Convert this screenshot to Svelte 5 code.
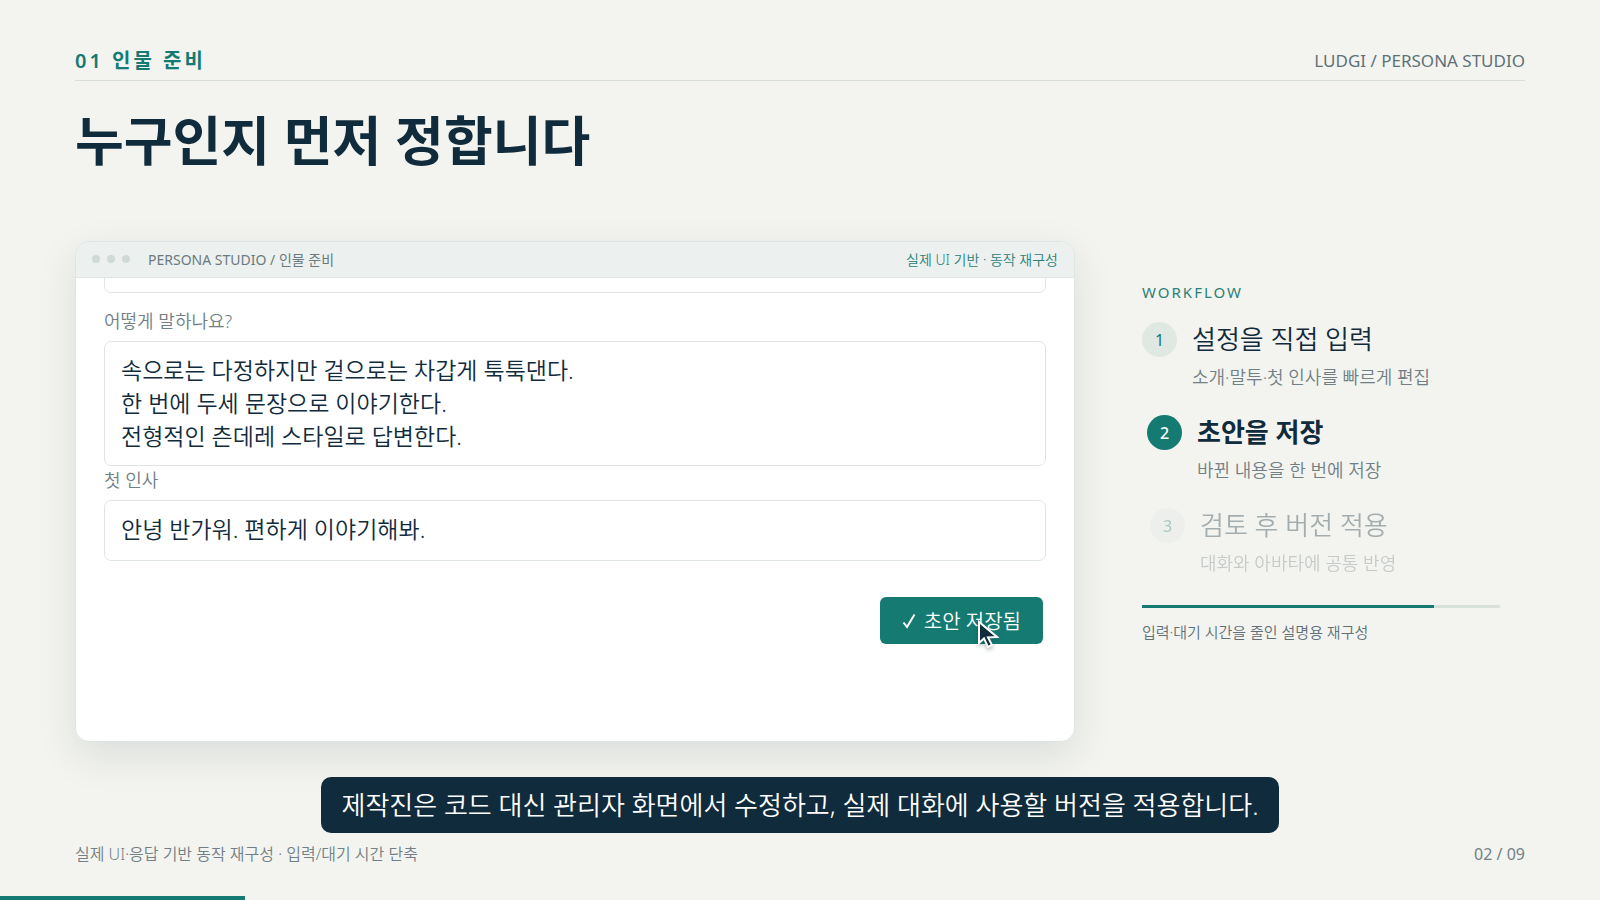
<!--
Persona Studio walkthrough - slide 02
Shows the draft form next to the workflow steps, with a caption below.
-->

<script lang="ts">
  interface Step {
    title: string
    detail: string
    state: 'done' | 'active' | 'pending'
  }

  const steps: Step[] = [
    { title: '설정을 직접 입력', detail: '소개·말투·첫 인사를 빠르게 편집', state: 'done' },
    { title: '초안을 저장', detail: '바뀐 내용을 한 번에 저장', state: 'active' },
    { title: '검토 후 버전 적용', detail: '대화와 아바타에 공통 반영', state: 'pending' },
  ]

  const stepProgress = 81.6
  const videoProgress = 15.3

  let intro = $state('')
  let tone = $state(
    '속으로는 다정하지만 겉으로는 차갑게 툭툭댄다.\n한 번에 두세 문장으로 이야기한다.\n전형적인 츤데레 스타일로 답변한다.'
  )
  let greeting = $state('안녕 반가워. 편하게 이야기해봐.')
</script>

<div class="slide">
  <header class="topline">
    <p class="chapter">01 인물 준비</p>
    <p class="brand">LUDGI / PERSONA STUDIO</p>
  </header>

  <h1>누구인지 먼저 정합니다</h1>

  <main class="stage">
    <section class="window">
      <div class="titlebar">
        <span class="dots"><i></i><i></i><i></i></span>
        <span class="window-title">PERSONA STUDIO / 인물 준비</span>
        <span class="window-note">실제 UI 기반 · 동작 재구성</span>
      </div>
      <div class="window-body">
        <form onsubmit={(e) => e.preventDefault()}>
          <input class="field intro" aria-label="소개" bind:value={intro} />
          <label for="tone">어떻게 말하나요?</label>
          <textarea id="tone" class="field" rows="3" bind:value={tone}></textarea>
          <label for="greeting">첫 인사</label>
          <input id="greeting" class="field" bind:value={greeting} />
          <div class="actions">
            <button type="submit">
              <svg class="check" viewBox="0 0 14 16" aria-hidden="true">
                <path d="M1.5 9.5 5 14 12.5 1.5" />
              </svg>
              초안 저장됨
            </button>
            <svg class="pointer" viewBox="0 0 26 34" aria-hidden="true">
              <path d="M3 3V24L8 19.5L12 28L16 26L12 18.5L21 18Z" />
            </svg>
          </div>
        </form>
      </div>
    </section>

    <aside class="workflow">
      <h2>WORKFLOW</h2>
      <ol>
        {#each steps as step, i}
          <li class={step.state}>
            <span class="badge">{i + 1}</span>
            <div>
              <h3>{step.title}</h3>
              <p>{step.detail}</p>
            </div>
          </li>
        {/each}
      </ol>
      <div class="track"><div class="fill" style:width="{stepProgress}%"></div></div>
      <p class="remark">입력·대기 시간을 줄인 설명용 재구성</p>
    </aside>
  </main>

  <p class="caption">
    제작진은 코드 대신 관리자 화면에서 수정하고, 실제 대화에 사용할 버전을 적용합니다.
  </p>

  <footer>
    <span>실제 UI·응답 기반 동작 재구성 · 입력/대기 시간 단축</span>
    <span class="page">02 / 09</span>
  </footer>

  <div class="timeline" style:width="{videoProgress}%"></div>
</div>

<style>
  :global(body) {
    background: #f3f4ef;
  }

  .slide {
    --ink: #102b3c;
    --teal: #157a72;
    --muted: #718087;
    --line: #dfe5e4;
    position: relative;
    box-sizing: border-box;
    min-height: 100vh;
    padding: 40px 75px 34px;
    display: flex;
    flex-direction: column;
    color: var(--ink);
    background: #f3f4ef;
    font-family: 'Noto Sans', 'Noto Sans CJK KR', sans-serif;
    font-weight: 350;
  }

  h1,
  h2,
  h3,
  p,
  ol {
    margin: 0;
    padding: 0;
  }

  .topline {
    display: flex;
    justify-content: space-between;
    align-items: center;
    height: 40px;
    border-bottom: 1px solid #d5dcd9;
  }

  .chapter {
    padding-bottom: 2px;
    color: var(--teal);
    font-size: 20px;
    font-weight: 600;
    letter-spacing: 3px;
  }

  .brand {
    color: #5f7078;
    font-size: 17px;
    font-weight: 400;
  }

  h1 {
    margin-top: 20px;
    font-size: 53px;
    font-weight: 600;
    line-height: 80px;
  }

  .stage {
    display: grid;
    grid-template-columns: minmax(0, 1fr) 383px;
    gap: 67px;
    margin-top: 60px;
  }

  .window {
    box-sizing: border-box;
    display: flex;
    flex-direction: column;
    min-height: 501px;
    overflow: hidden;
    background: #fff;
    border: 1px solid var(--line);
    border-radius: 14px;
    box-shadow: 0 14px 40px rgba(16, 43, 60, 0.1);
  }

  .titlebar {
    box-sizing: border-box;
    display: flex;
    align-items: center;
    height: 36px;
    padding: 0 16px 2px;
    background: #ecf1ef;
    border-bottom: 1px solid var(--line);
    font-size: 14px;
    font-weight: 400;
  }

  .dots {
    display: flex;
    gap: 7px;
    margin-right: 18px;
  }

  .dots i {
    width: 8px;
    height: 8px;
    border-radius: 50%;
    background: #d0d9d7;
  }

  .window-title {
    color: #6b7a80;
  }

  .window-note {
    margin-left: auto;
    color: #2b8078;
    font-weight: 350;
  }

  .window-body {
    flex: 1;
    overflow: hidden;
  }

  form {
    display: flex;
    flex-direction: column;
    margin-top: -46px;
    padding: 0 28px;
  }

  .field {
    box-sizing: border-box;
    width: 100%;
    height: 61px;
    margin: 0;
    padding: 10px 16px 16px;
    border: 1px solid var(--line);
    border-radius: 7px;
    background: #fff;
    color: var(--ink);
    font: inherit;
    font-size: 23px;
    line-height: 33px;
    outline: none;
    resize: none;
  }

  textarea.field {
    height: 125px;
    padding: 12px 16px;
    overflow: hidden;
  }

  .intro {
    margin-bottom: 14px;
  }

  label {
    margin-bottom: 6px;
    color: var(--muted);
    font-size: 18px;
    line-height: 28px;
  }

  .actions {
    position: relative;
    align-self: flex-end;
    margin: 36px 3px 0 0;
  }

  button {
    display: flex;
    align-items: center;
    gap: 8px;
    height: 47px;
    padding: 0 22px;
    border: 0;
    border-radius: 6px;
    background: var(--teal);
    color: #fff;
    font: inherit;
    font-size: 20px;
  }

  .check {
    width: 14px;
    height: 16px;
    fill: none;
    stroke: currentColor;
    stroke-width: 2;
  }

  .pointer {
    position: absolute;
    top: 22px;
    left: 96px;
    width: 26px;
    height: 34px;
    fill: var(--ink);
    stroke: #fff;
    stroke-width: 2;
    filter: drop-shadow(0 2px 2px rgba(16, 43, 60, 0.35));
  }

  .workflow {
    padding: 39px 25px 0 0;
  }

  h2 {
    color: #2b8078;
    font-size: 15px;
    font-weight: 400;
    letter-spacing: 2px;
    line-height: 24px;
  }

  ol {
    list-style: none;
    margin: 18px 0 4px;
  }

  li {
    display: flex;
    gap: 15px;
    height: 93px;
  }

  .active {
    margin-left: 5px;
  }

  .pending {
    margin-left: 8px;
    opacity: 0.35;
  }

  .badge {
    flex: none;
    width: 35px;
    height: 35px;
    border-radius: 50%;
    background: #e0e8e4;
    color: var(--teal);
    font-size: 16px;
    font-weight: 400;
    line-height: 36px;
    text-align: center;
  }

  .active .badge {
    background: var(--teal);
    color: #fff;
    font-weight: 500;
  }

  h3 {
    font-size: 26px;
    font-weight: 350;
    line-height: 35px;
  }

  .active h3 {
    font-weight: 600;
  }

  li p {
    margin-top: 8px;
    color: var(--muted);
    font-size: 18px;
    line-height: 24px;
  }

  .track {
    height: 3px;
    background: #d9e1dd;
  }

  .fill {
    height: 100%;
    background: var(--teal);
  }

  .remark {
    margin-top: 12px;
    color: #5f7078;
    font-size: 15px;
    line-height: 24px;
  }

  .caption {
    align-self: center;
    margin-top: 35px;
    padding: 0 20px;
    border-radius: 10px;
    background: var(--ink);
    color: #fff;
    font-size: 26px;
    line-height: 56px;
  }

  footer {
    display: flex;
    justify-content: space-between;
    margin-top: 9px;
    color: var(--muted);
    font-size: 16px;
    line-height: 24px;
  }

  .page {
    font-weight: 400;
  }

  .timeline {
    position: absolute;
    left: 0;
    bottom: 0;
    height: 4px;
    background: var(--teal);
  }
</style>
